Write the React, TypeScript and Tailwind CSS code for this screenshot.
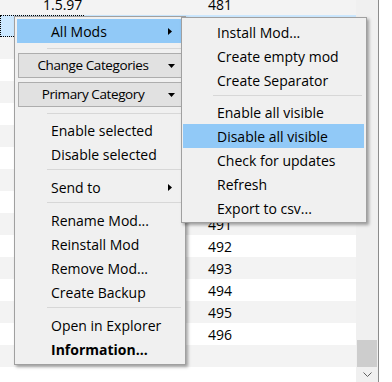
import React from "react";

const font = { fontFamily: '"Open Sans", "Noto Sans", sans-serif' };

const RightArrow = () => (
  <svg width="4" height="7" viewBox="0 0 4 7" className="shrink-0">
    <path d="M0 0 L4 3.5 L0 7 Z" fill="#000" />
  </svg>
);

const DownArrow = () => (
  <svg width="7" height="4" viewBox="0 0 7 4" className="shrink-0">
    <path d="M0 0 L7 0 L3.5 4 Z" fill="#000" />
  </svg>
);

const Item: React.FC<{ label: string; active?: boolean; bold?: boolean; arrow?: boolean }> = ({
  label,
  active,
  bold,
  arrow,
}) => (
  <div
    className={`h-[24px] flex items-center justify-between pl-[34px] pr-[11px] ${active ? "bg-[#91c9f7]" : ""} ${bold ? "font-bold" : ""}`}
  >
    <span>{label}</span>
    {arrow && <RightArrow />}
  </div>
);

const Sep: React.FC<{ h: string; top: string }> = ({ h, top }) => (
  <div className={`${h} ${top} ml-[30px] mr-[2px]`}>
    <div className="h-px bg-[#d7d7d7]" />
  </div>
);

const DropButton: React.FC<{ label: string }> = ({ label }) => (
  <div className="h-[25px] ml-px mr-px flex items-center bg-[#e1e1e1] border border-[#adadad]">
    <span className="w-[148px] text-center text-[13.5px] tracking-[-0.4px]">{label}</span>
    <span className="ml-px">
      <DownArrow />
    </span>
  </div>
);

export default function App() {
  const rows = Array.from({ length: 19 }, (_, i) => i);

  return (
    <div
      className="relative w-[392px] h-[382px] overflow-hidden bg-white text-[14px] text-black"
      style={font}
    >
      <div className="flex h-full">
        {/* mod list, rows 482-490 sit under the menus */}
        <div className="w-[356px] -mt-[7px] flex flex-col">
          {rows.map((i) => {
            const k = i - 1;
            const selected = k === 0;
            const prio = 481 + i;
            const shown = prio === 481 || (prio >= 491 && prio <= 496);
            const stripe = selected ? "bg-[#cce8ff]" : k % 2 !== 0 ? "bg-[#f3f3f3]" : "bg-white";
            return (
              <div key={i} className={`relative h-[22px] shrink-0 flex items-center ${stripe}`}>
                <span className="w-[43px]" />
                <span className="w-[165px]">{k === -1 ? "1.5.97" : ""}</span>
                <span>{shown ? prio : ""}</span>
                {selected && (
                  <div className="absolute left-0 top-0 w-[84px] h-full border border-dotted border-black" />
                )}
              </div>
            );
          })}
        </div>

        {/* scrollbar */}
        <div className="w-[22px] bg-[#f0f0f0] flex flex-col justify-end">
          <div className="mx-px h-[27px] bg-[#cdcdcd]" />
          <div className="h-[15px] flex items-center justify-center">
            <svg width="9" height="6" viewBox="0 0 9 6">
              <path d="M0.5 0.5 L4.5 4.5 L8.5 0.5" stroke="#606060" strokeWidth="1" fill="none" />
            </svg>
          </div>
        </div>
        <div className="w-px bg-[#8c8c8c]" />
        <div className="flex-1 bg-white" />
      </div>

      {/* context menu */}
      <div className="absolute left-[14px] top-[16px] w-[172px] bg-[#f0f0f0] border border-[#a0a0a0] pt-[2px] pb-[3px] px-[2px] shadow-[2px_2px_3px_rgba(0,0,0,0.35)]">
        <Item label="All Mods" active arrow />
        <Sep h="h-[10px]" top="pt-[5px]" />
        <DropButton label="Change Categories" />
        <div className="h-[4px]" />
        <DropButton label="Primary Category" />
        <Sep h="h-[11px]" top="pt-[6px]" />
        <Item label="Enable selected" />
        <Item label="Disable selected" />
        <Sep h="h-[9px]" top="pt-[3px]" />
        <Item label="Send to" arrow />
        <Sep h="h-[9px]" top="pt-[3px]" />
        <Item label="Rename Mod..." />
        <Item label="Reinstall Mod" />
        <Item label="Remove Mod..." />
        <Item label="Create Backup" />
        <Sep h="h-[9px]" top="pt-[3px]" />
        <Item label="Open in Explorer" />
        <Item label="Information..." bold />
      </div>

      {/* All Mods submenu */}
      <div className="absolute left-[181px] top-[17px] w-[186px] bg-[#f0f0f0] border border-[#a0a0a0] pt-[2px] pb-[2px] pl-[1px] pr-[2px] shadow-[2px_2px_3px_rgba(0,0,0,0.35)]">
        <Item label="Install Mod..." />
        <Item label="Create empty mod" />
        <Item label="Create Separator" />
        <Sep h="h-[8px]" top="pt-[3px]" />
        <Item label="Enable all visible" />
        <Item label="Disable all visible" active />
        <Item label="Check for updates" />
        <Item label="Refresh" />
        <Item label="Export to csv..." />
      </div>
    </div>
  );
}
